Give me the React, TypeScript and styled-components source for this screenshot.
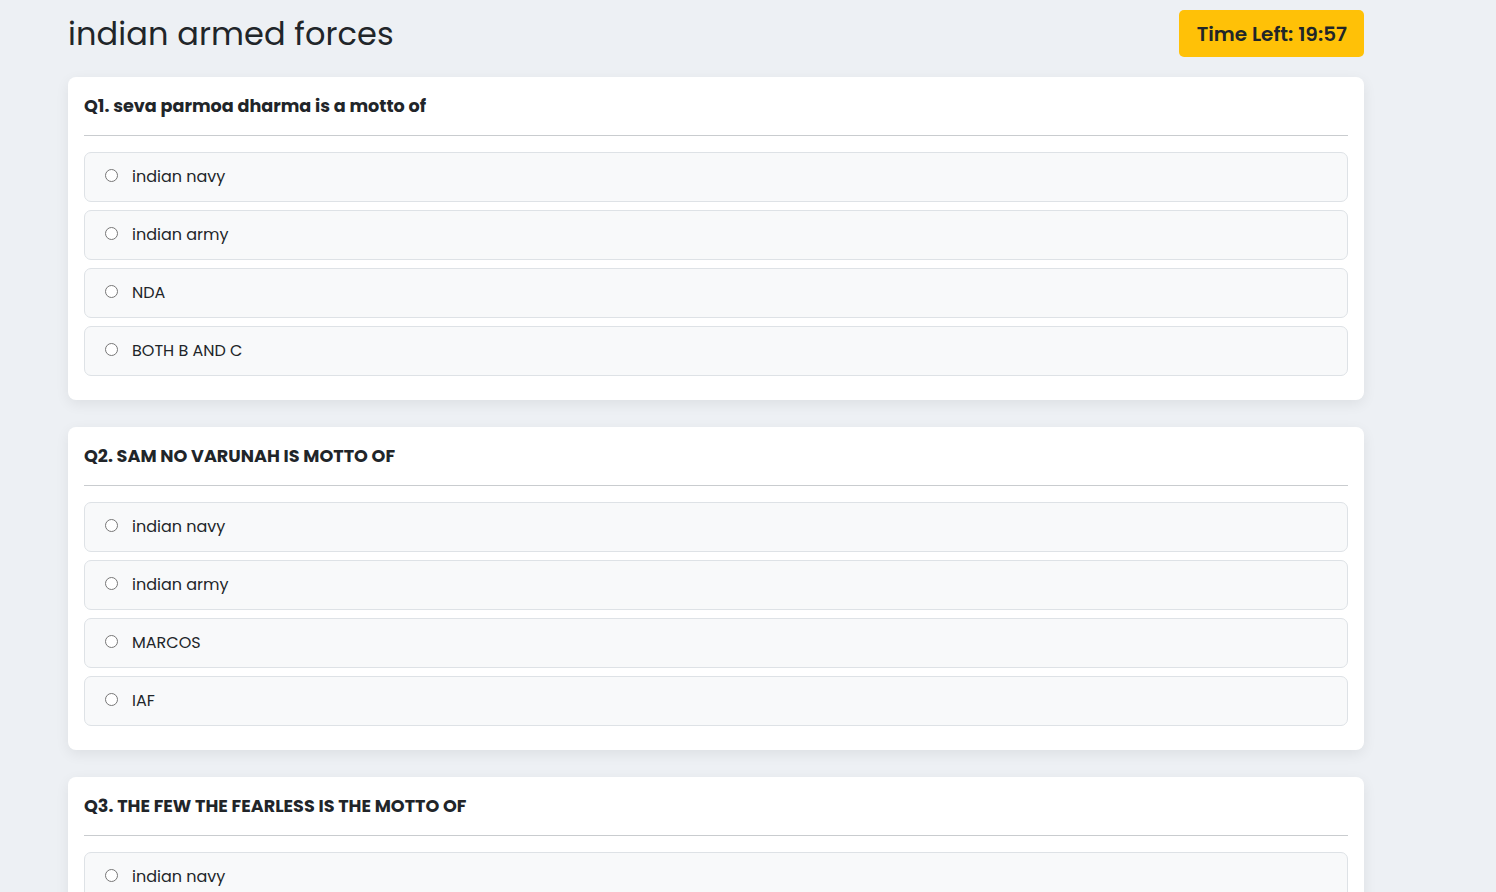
import React from "react";
import styled, { createGlobalStyle } from "styled-components";

const Global = createGlobalStyle`
  html, body { margin: 0; padding: 0; }
  body {
    background: #edf0f4;
    color: #212529;
    font-family: "Poppins", Inter, "Noto Sans", sans-serif;
  }
  ::-webkit-scrollbar { width: 0; height: 0; }
`;

const Page = styled.div`
  width: 1296px;
  margin-left: 68px;
  padding-top: 10px;
`;

const Header = styled.header`
  display: flex;
  align-items: center;
  justify-content: space-between;
  height: 47px;
  margin-bottom: 20px;
`;

const Title = styled.h1`
  margin: 2px 0 0;
  font-size: 32px;
  font-weight: 400;
  letter-spacing: 0.1px;
  line-height: 1.2;
`;

const Timer = styled.div`
  background: #ffc107;
  border-radius: 5px;
  height: 47px;
  padding: 0 17px 0 18px;
  display: flex;
  align-items: center;
  font-size: 20px;
  font-weight: 600;
  color: #212529;
`;

const Card = styled.section`
  background: #fff;
  border-radius: 8px;
  box-shadow: 0 4px 14px rgba(0, 0, 0, 0.07);
  padding: 16px 16px 16px;
  margin-bottom: 27px;
`;

const Question = styled.h2`
  margin: 0;
  font-size: 17.6px;
  font-weight: 700;
  line-height: 26px;
`;

const Rule = styled.hr`
  border: 0;
  border-top: 1px solid #c9cccf;
  margin: 16px 0 16px;
`;

const Options = styled.div`
  display: flex;
  flex-direction: column;
  gap: 8px;
  padding-bottom: 8px;
`;

const Option = styled.label`
  display: flex;
  align-items: center;
  gap: 14px;
  height: 48px;
  padding: 0 20px 0 20px;
  background: #f8f9fa;
  border: 1px solid #dee2e6;
  border-radius: 7px;
  font-size: 16px;
  line-height: 24px;
  cursor: pointer;
`;

const Radio = styled.input`
  margin: 0;
  width: 13px;
  height: 13px;
  position: relative;
  top: -2px;
`;

const quiz = [
  {
    q: "Q1. seva parmoa dharma is a motto of",
    options: ["indian navy", "indian army", "NDA", "BOTH B AND C"],
  },
  {
    q: "Q2. SAM NO VARUNAH IS MOTTO OF",
    options: ["indian navy", "indian army", "MARCOS", "IAF"],
  },
  {
    q: "Q3. THE FEW THE FEARLESS IS THE MOTTO OF",
    options: ["indian navy", "indian army", "MARCOS", "IAF"],
  },
];

export default function App() {
  return (
    <>
      <Global />
      <Page>
        <Header>
          <Title>indian armed forces</Title>
          <Timer>Time Left: 19:57</Timer>
        </Header>
        {quiz.map((item, qi) => (
          <Card key={qi}>
            <Question>{item.q}</Question>
            <Rule />
            <Options>
              {item.options.map((o, oi) => (
                <Option key={oi}>
                  <Radio type="radio" name={`q${qi}`} />
                  <span>{o}</span>
                </Option>
              ))}
            </Options>
          </Card>
        ))}
      </Page>
    </>
  );
}
